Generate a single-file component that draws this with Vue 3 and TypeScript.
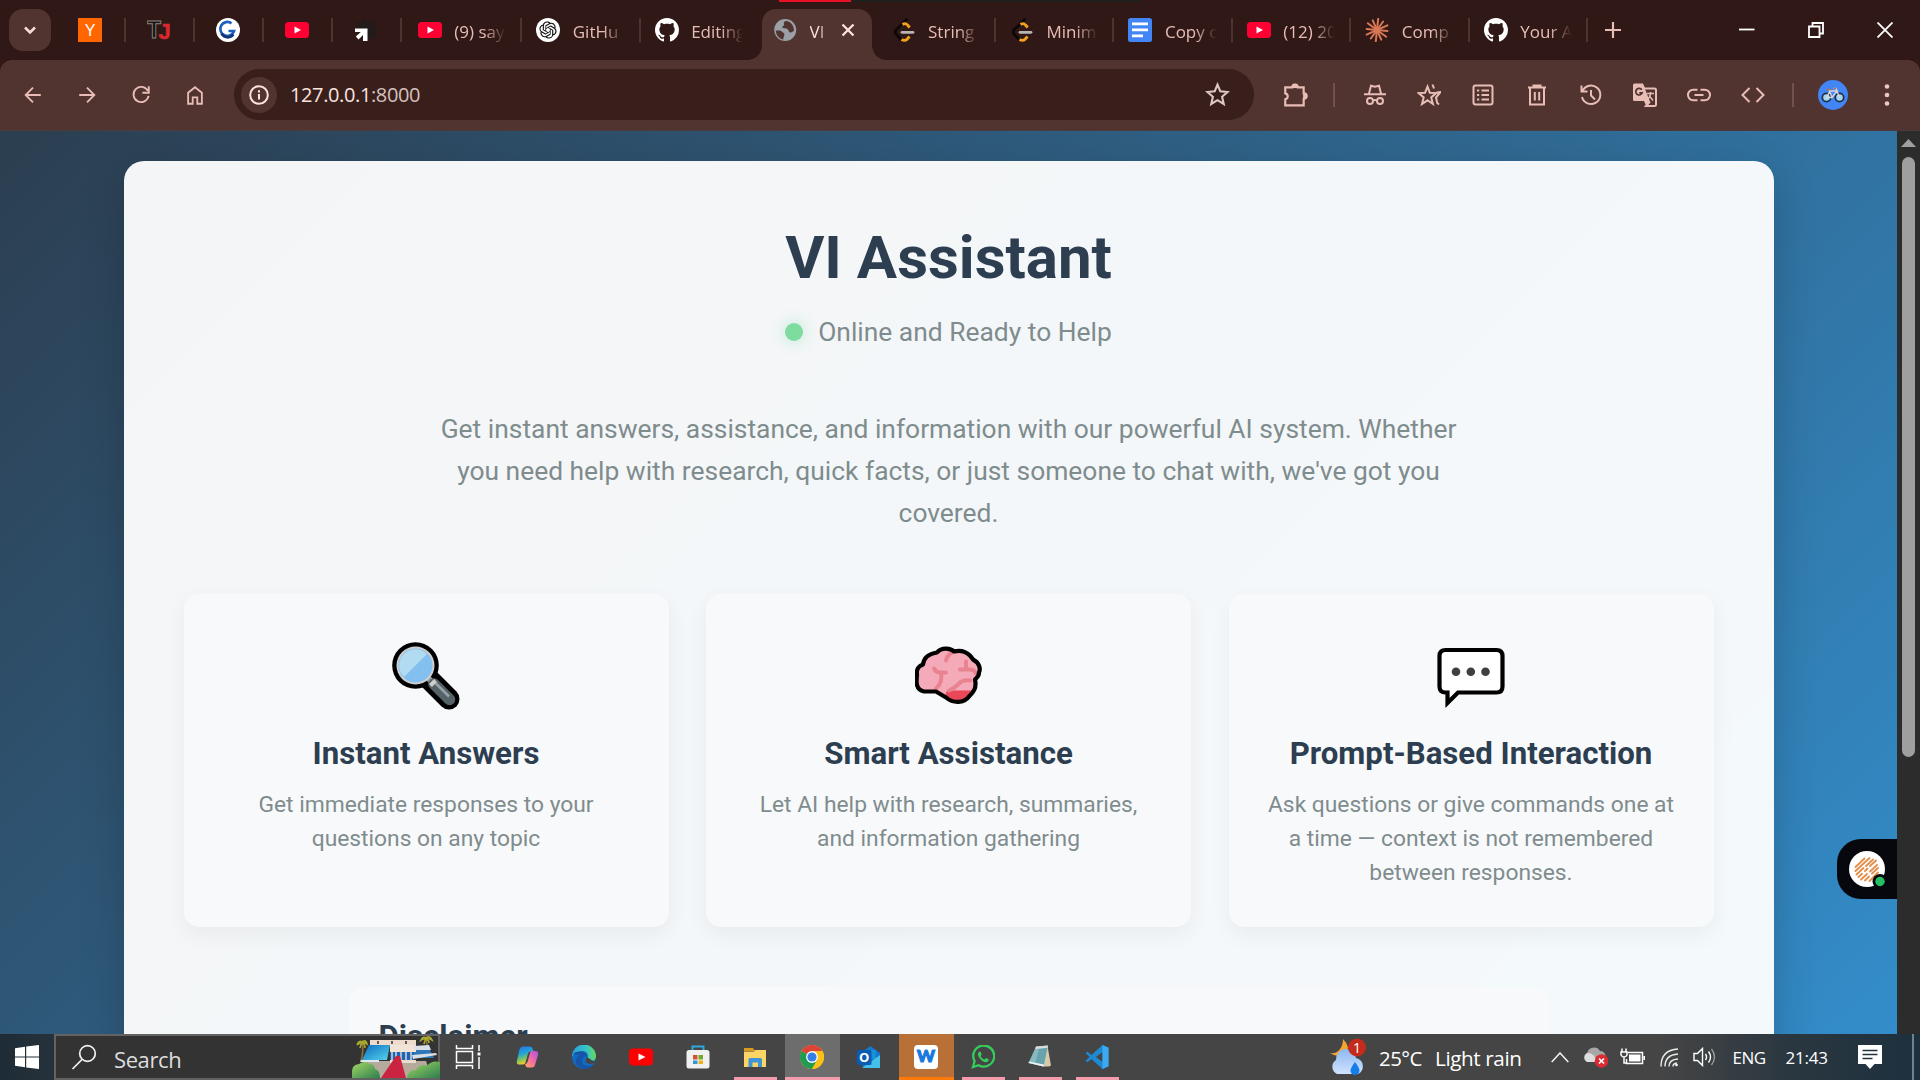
<script setup lang="ts">
interface Tab { icon: string; label?: string; active?: boolean; sep?: boolean }
interface Tool { icon: string; name: string }
interface TaskApp { icon: string; name: string; state?: 'open' | 'focus' | 'alert' }
interface Feature { icon: string; title: string; lines: string[] }

const youtube = '<rect x="0" y="4" width="24" height="16" rx="3.5" fill="#ff0033"/><path d="M9.5 8.5 16 12l-6.500 3.500z" fill="#fff"/>'
const github = '<g transform="scale(1.5)"><path fill="#fff" d="M8 0C3.58 0 0 3.58 0 8c0 3.54 2.29 6.53 5.47 7.59.4.07.55-.17.55-.38 0-.19-.01-.82-.01-1.49-2.01.37-2.53-.49-2.69-.94-.09-.23-.48-.94-.82-1.13-.28-.15-.68-.52-.01-.53.63-.01 1.08.58 1.23.82.72 1.21 1.87.87 2.33.66.07-.52.28-.87.51-1.07-1.78-.2-3.64-.89-3.64-3.95 0-.87.31-1.59.82-2.15-.08-.2-.36-1.02.08-2.12 0 0 .67-.21 2.2.82.64-.18 1.32-.27 2-.27.68 0 1.36.09 2 .27 1.53-1.04 2.2-.82 2.2-.82.44 1.1.16 1.92.08 2.12.51.56.82 1.27.82 2.15 0 3.07-1.87 3.75-3.65 3.95.29.25.54.73.54 1.48 0 1.07-.01 1.93-.01 2.2 0 .21.15.46.55.38A8.013 8.013 0 0016 8c0-4.42-3.58-8-8-8z"/></g>'
const leetcode = '<path d="M14.500 1.500 4.500 11.500q-2.500 2.500 0 5l4.500 5" fill="none" stroke="#0c0806" stroke-width="2.800" stroke-linecap="round"/><path d="M10.500 6.500q3-2 5 .5l2.200 2.500M9.500 21.500q3.500 2 5.800-.5l2.200-2.500" fill="none" stroke="#f5a11c" stroke-width="2.800"/><path d="M10 14.300h11" stroke="#b8b5b4" stroke-width="2.800" stroke-linecap="round"/>'
const rays = Array.from({ length: 12 }, (_, i) => `<path d="M12 12V${i % 2 ? 1.5 : 0.6}" transform="rotate(${i * 30 + 6} 12 12)"/>`).join('')

const fav: Record<string, string> = {
  yc: '<rect width="24" height="24" fill="#ff6600"/><text x="12" y="18" text-anchor="middle" font-family="Liberation Sans" font-size="16" fill="#fff">Y</text>',
  tj: '<text x="0" y="19.500" font-family="Liberation Sans" font-weight="700" font-size="23" fill="#171313" stroke="#8d8583" stroke-width=".9">T</text><text x="11.500" y="20.500" font-family="Liberation Sans" font-weight="700" font-size="22" fill="#e5222b" stroke="#c0393c" stroke-width=".6">J</text>',
  g: '<circle cx="12" cy="12" r="12" fill="#fff"/><path d="M15.500 5.300A7 7 0 1 0 18 13h-5.500" fill="none" stroke="#1b5fc0" stroke-width="2.700"/><path d="M5.500 15.500a7 7 0 0 0 11.800 1" fill="none" stroke="#103475" stroke-width="2.700"/>',
  youtube,
  arrow: '<circle cx="13" cy="12" r="9" fill="#211c1b"/><path d="M3 8 5 4M9 3l2-3M20 4l2-2M22 11h2M20 18l2 2" stroke="#211c1b" stroke-width="3"/><path d="M1 10.500h12.500V23H9v-6l-4.500 4.500-2.700-3 5-4.500H1z" fill="#fff"/>',
  gpt: '<circle cx="12" cy="12" r="12" fill="#fff"/><g transform="translate(3.400 3.400) scale(.717)"><path fill="#111" d="M22.2819 9.8211a5.9847 5.9847 0 0 0-.5157-4.9108 6.0462 6.0462 0 0 0-6.5098-2.9A6.0651 6.0651 0 0 0 4.9807 4.1818a5.9847 5.9847 0 0 0-3.9977 2.9 6.0462 6.0462 0 0 0 .7427 7.0966 5.98 5.98 0 0 0 .511 4.9107 6.051 6.051 0 0 0 6.5146 2.9001A5.9847 5.9847 0 0 0 13.2599 24a6.0557 6.0557 0 0 0 5.7718-4.2058 5.9894 5.9894 0 0 0 3.9977-2.9001 6.0557 6.0557 0 0 0-.7475-7.0729zm-9.022 12.6081a4.4755 4.4755 0 0 1-2.8764-1.0408l.1419-.0804 4.7783-2.7582a.7948.7948 0 0 0 .3927-.6813v-6.7369l2.02 1.1686a.071.071 0 0 1 .038.052v5.5826a4.504 4.504 0 0 1-4.4945 4.4944zm-9.6607-4.1254a4.4708 4.4708 0 0 1-.5346-3.0137l.142.0852 4.783 2.7582a.7712.7712 0 0 0 .7806 0l5.8428-3.3685v2.3324a.0804.0804 0 0 1-.0332.0615L9.74 19.9502a4.4992 4.4992 0 0 1-6.1408-1.6464zM2.3408 7.8956a4.485 4.485 0 0 1 2.3655-1.9728V11.6a.7664.7664 0 0 0 .3879.6765l5.8144 3.3543-2.0201 1.1685a.0757.0757 0 0 1-.071 0l-4.8303-2.7865A4.504 4.504 0 0 1 2.3408 7.872zm16.5963 3.8558L13.1038 8.364 15.1192 7.2a.0757.0757 0 0 1 .071 0l4.8303 2.7913a4.4944 4.4944 0 0 1-.6765 8.1042v-5.6772a.79.79 0 0 0-.407-.667zm2.0107-3.0231l-.142-.0852-4.7735-2.7818a.7759.7759 0 0 0-.7854 0L9.409 9.2297V6.8974a.0662.0662 0 0 1 .0284-.0615l4.8303-2.7866a4.4992 4.4992 0 0 1 6.6802 4.66zM8.3065 12.863l-2.02-1.1638a.0804.0804 0 0 1-.038-.0567V6.0742a4.4992 4.4992 0 0 1 7.3757-3.4537l-.142.0805L8.704 5.459a.7948.7948 0 0 0-.3927.6813zm1.0976-2.3654l2.602-1.4998 2.6069 1.4998v2.9994l-2.5974 1.4997-2.6067-1.4997Z"/></g>',
  github,
  globe: '<circle cx="12.200" cy="12" r="11" fill="#9aa0a6"/><path d="M2.800 12.500c3 0 5-.5 6 1s3 1 2.500 3.500-1 2-1 4.500C6 21 3 17 2.800 12.500zM13 3c-2 .5-2.500 2-2 3.200.6 1.500-2 1.800-1.500 3.300.6 1.500 3.500.5 5 1.500s1 3.500 3 3.500 2-1.500 3.500-1.500C21.300 8 18 3.500 13 3z" fill="#513330"/>',
  leetcode,
  docs: '<rect width="24" height="24" rx="2.500" fill="#4285f4"/><path d="M4 5.900h16M4 11.900h16M4 17.900h11" stroke="#fff" stroke-width="2.800"/>',
  claude: `<g stroke="#d97757" stroke-width="2" stroke-linecap="round">${rays}</g>`,
}

const pinned: Tab[] = [{ icon: 'yc', sep: true }, { icon: 'tj', sep: true }, { icon: 'g', sep: true }, { icon: 'youtube', sep: true }, { icon: 'arrow', sep: true }]
const tabs: Tab[] = [
  { icon: 'youtube', label: '(9) say', sep: true },
  { icon: 'gpt', label: 'GitHu', sep: true },
  { icon: 'github', label: 'Editing' },
  { icon: 'globe', label: 'VI', active: true },
  { icon: 'leetcode', label: 'String', sep: true },
  { icon: 'leetcode', label: 'Minim', sep: true },
  { icon: 'docs', label: 'Copy o', sep: true },
  { icon: 'youtube', label: '(12) 20', sep: true },
  { icon: 'claude', label: 'Comp', sep: true },
  { icon: 'github', label: 'Your A', sep: true },
]

const glyph: Record<string, string> = {
  back: '<path d="M20.500 12H4.500M12 4l-8 8 8 8"/>',
  forward: '<path d="M3.500 12h16M12 4l8 8-8 8"/>',
  reload: '<path d="M19.500 7.500A8.300 8.300 0 1 0 20.300 13M20.500 2.500v7h-7"/>',
  home: '<path d="M4.500 21.500v-12L12 3.500l7.500 6v12h-5v-7h-5v7z"/>',
  star: '<path d="m12 2.500 2.700 6.500 7 .6-5.300 4.600 1.600 6.900-6-3.700-6 3.700 1.600-6.900L2.300 9.600l7-.6z"/>',
  ext: '<path d="M3 5h6.500a2.500 2.500 0 0 1 5 0H20v5.500a2.500 2.500 0 0 1 0 5V21.500H3V16a2.800 2.800 0 0 0 0-5.500z"/><path d="M9.800 4.500a2.200 2.200 0 0 1 4.400 0zM20.500 10.800a2.200 2.200 0 0 1 0 4.400z" fill="currentColor"/>',
  incognito: '<path d="M6 10.500 8 2.800l4 1 4-1 2 7.700M1 11.200h22"/><circle cx="7" cy="18" r="3"/><circle cx="17" cy="18" r="3"/><path d="M10 17.500q2-1.200 4 0"/>',
  stars: '<path d="m10.500 3.500 2.300 6.200 6.400.4-5 4.300 1.700 6.600-5.400-3.700L5 21l1.700-6.600-5-4.300 6.400-.4z"/><path d="m15.500 1.500 1.500 4M19.500 9.500l4-.5-4.500 5.500 1.200 5.500 1.800 1.500"/>',
  list: '<rect x="2.500" y="2.500" width="19" height="19" rx="2"/><path d="M10.500 7.500h7.500M10.500 12h7.500M10.500 16.500h7.500M6 7.500h2.200M6 12h2.200M6 16.500h2.200"/>',
  trash: '<path d="M5 5v16.500h14V5M3 4.500h18M8.500 3.500V2.500h7v1M9.800 9v8.500M14.200 9v8.500"/>',
  history: '<path d="M3.500 8A9.300 9.300 0 1 1 3 14M2.500 2.500v6h6M12 7v5.500l4 4"/>',
  translate: '<path d="M1.500.5H10L12.500 6h-.5l5 12.500-4 4L11 18H1.500Q0 18 0 16.500V2Q0 .5 1.500.5z" fill="currentColor" stroke="none"/><path d="M11.500 5.500h10q1.500 0 1.500 1.500v14.500q0 1.500-1.500 1.500H13l4-4.500"/><path d="M14 10.500h7M17.500 9v1.500q0 3.500-2.500 5.500M16 12.500l4 5" stroke-width="1.500"/><path d="M8.800 6.800a3.300 3.300 0 1 0 .4 3H6.300" stroke="#513330" stroke-width="1.700"/>',
  link: '<path d="M10.500 6.800H6.200a5.200 5.200 0 0 0 0 10.400h4.300M13.500 6.800h4.300a5.200 5.200 0 0 1 0 10.400h-4.300M7.500 12h9"/>',
  code: '<path d="M8.500 5 1.500 12l7 7M15.500 5l7 7-7 7"/>',
}
const tools: Tool[] = [
  { icon: 'incognito', name: 'New incognito window' }, { icon: 'stars', name: 'Bookmarks' }, { icon: 'list', name: 'Reading list' },
  { icon: 'trash', name: 'Delete browsing data' }, { icon: 'history', name: 'History' }, { icon: 'translate', name: 'Translate' },
  { icon: 'link', name: 'Copy link' }, { icon: 'code', name: 'Developer tools' },
]

const brainShape = 'M9 47C-1 45 2 34 2 30c-1-6 3-9 6-10 1-8 7-11 14-12 5-6 14-4 17-1 8-2 15 1 19 8 6 3 8 9 6 13 0 4-2 5-4 7 2 9-2 13-6 17-5 7-16 7-23 1l-10-6h-12z'
const emoji: Record<string, string> = {
  search: '<path d="m38 38 19 19" stroke="#000" stroke-width="21" stroke-linecap="round"/><circle cx="23.500" cy="23.500" r="23.300" fill="#000"/><path d="m36 36 6 6" stroke="#909a9e" stroke-width="6"/><path d="m42 42 15.500 15.500" stroke="#556368" stroke-width="11.500" stroke-linecap="round"/><path d="m43.500 41 13.500 13.500" stroke="#96a3a7" stroke-width="2.500"/><path d="m38.500 43.500 5-5" stroke="#d0cfce" stroke-width="4"/><circle cx="23.500" cy="23.500" r="19" fill="#d0cfce"/><circle cx="23.500" cy="23.500" r="17" fill="#83bfef"/><path d="M12 35A15.500 15.500 0 0 1 35 12z" fill="#b1dbf1"/>',
  brain: `<g transform="translate(0 2.500)"><path d="${brainShape}" fill="#f4aab9"/><path d="M32 46h27c-3 8-9 12-16 12-5 0-8-3-13-7z" fill="#ea4758"/><g fill="none" stroke="#e8838f" stroke-width="4" stroke-linecap="round"><path d="M31 16q1-5 6-8M19 24q2 4 6 4h6M26 28q2 10-5 16M51 17v8M45 25h9q6 0 7 4M34 46q5-2 9-6 4-5 12-4"/></g><path d="${brainShape}" fill="none" stroke="#000" stroke-width="4.200" stroke-linejoin="round"/></g>`,
  chat: '<path d="M8.500 8h51q6 0 6 6v30.500q0 6-6 6H21L10.500 61V50.500h-2q-6 0-6-6V14q0-6 6-6z" fill="#fff" stroke="#000" stroke-width="4.200"/><g fill="#3f3f3f"><circle cx="19" cy="29.800" r="4.300"/><circle cx="33.800" cy="29.800" r="4.300"/><circle cx="48.500" cy="29.800" r="4.300"/></g>',
}
const features: Feature[] = [
  { icon: 'search', title: 'Instant Answers', lines: ['Get immediate responses to your', 'questions on any topic'] },
  { icon: 'brain', title: 'Smart Assistance', lines: ['Let AI help with research, summaries,', 'and information gathering'] },
  { icon: 'chat', title: 'Prompt-Based Interaction', lines: ['Ask questions or give commands one at', 'a time — context is not remembered', 'between responses.'] },
]

const app: Record<string, string> = {
  copilot: '<defs><linearGradient id="cpA" x2=".3" y2="1"><stop stop-color="#2871e8"/><stop offset=".45" stop-color="#20a4d8"/><stop offset=".75" stop-color="#7fc75c"/><stop offset="1" stop-color="#f6ca31"/></linearGradient><linearGradient id="cpB" x1="1" x2="0" y2="1"><stop stop-color="#a853e5"/><stop offset=".5" stop-color="#f06aa5"/><stop offset="1" stop-color="#ffae5c"/></linearGradient></defs><path d="M8 1.500h7q2 0 2.500 2l1 3h-3q-2 0-2.500 2l-2.500 9q-.7 2-2.500 2H4q-3 0-2-4l2.500-11Q5.500 1.500 8 1.500z" fill="url(#cpA)"/><path d="M16.500 6H20q4 0 3 4l-2.800 9.500q-.7 3-3.200 3h-4q-2 0-2.500-2L10 19q2 0 2.700-2.500L15 8q.5-2 1.500-2z" fill="url(#cpB)"/>',
  edge: '<defs><linearGradient id="egA" x2="1"><stop stop-color="#289edb"/><stop offset=".6" stop-color="#36c4c7"/><stop offset="1" stop-color="#65da58"/></linearGradient></defs><circle cx="12" cy="12" r="12" fill="#126bc1"/><path d="M0 12A12 12 0 0 1 24 11c0 6-7 7-9 4-.5-1 1-1 1-4 0-5-6-6-10-4-3 1.300-5.500 3-6 5z" fill="url(#egA)"/><path d="M1 9c4-4 14-3 14 3-5-3-9 8 1 9 3 .2 5-1 6-2-4 6-11 6-15 3-5-4-4-10 1-12-3-.5-5-.5-7-1z" fill="#1655a5"/><path d="M15 12q-4 6 3 7 3 0 6-2-4-1-9-5z" fill="#454545"/>',
  youtube: '<rect y="3.500" width="24" height="17" rx="4" fill="#f00"/><path d="m9.500 8.500 7 3.500-7 3.500z" fill="#fff"/>',
  store: '<path d="M6.500 6V1.500h11V6" fill="none" stroke="#2fa9dd" stroke-width="2"/><rect x=".5" y="5" width="23" height="18.500" rx="2.500" fill="#f0f0f0"/><path d="M7 10h4.500v4.500H7z" fill="#d1532f"/><path d="M12.500 10H17v4.500h-4.500z" fill="#72a92e"/><path d="M7 15.500h4.500V19H7z" fill="#2d9bd3"/><path d="M12.500 15.500H17V19h-4.500z" fill="#f2ae1b"/>',
  explorer: '<path d="M1 3h9l2 3H1z" fill="#d99b1c"/><path d="M1 6.500h10l1-1.500h11v17H1z" fill="#fdd565"/><path d="M5.500 22V14.500q0-1.500 1.500-1.500h10.500q1.500 0 1.500 1.500V22h-4v-4.500H9.500V22z" fill="#3f95d5"/>',
  chrome: '<circle cx="12" cy="12" r="12" fill="#fbc116"/><path d="M12 12 1.600 6A12 12 0 0 1 22.400 6H12z" fill="#dd4436"/><path d="M12 12 1.600 6a12 12 0 0 0 10.400 18l5.200-9z" fill="#229b52"/><path d="M12 6h10.400a12 12 0 0 1-10.400 18l5.200-9z" fill="#fbc116"/><circle cx="12" cy="12" r="5.900" fill="#fff"/><circle cx="12" cy="12" r="4.600" fill="#347fea"/>',
  outlook: '<path d="M3 8 13.500 1 23 8v14.500H6z" fill="#1676ca"/><path d="M6 5h13v9H6z" fill="#1690dc"/><path d="M5 23 23 10v13z" fill="#44c1ea"/><rect y="5" width="14.500" height="15" rx="1.500" fill="#0b5bb3"/><text x="7.200" y="17" text-anchor="middle" font-family="Open Sans" font-weight="700" font-size="13" fill="#fff">O</text>',
  wps: '<rect width="24" height="24" rx="4" fill="#fff"/><text x="12" y="17.300" text-anchor="middle" font-family="Lato" font-weight="900" font-size="17" fill="#1878dd" stroke="#1878dd" stroke-width="1.100">W</text>',
  whatsapp: '<path d="m2 22 1.600-5.800a10.500 10.500 0 1 1 4 4z" fill="none" stroke="#33cd5c" stroke-width="2.300"/><path d="M7 8.500q1-2.500 2.500-1.800l1.200 2.800-1.200 1.700q1.200 2.300 3.800 3.500l1.500-1.800 2.900 1.300c.5 1-1 3-3 3C11 17 6.500 12 7 8.500z" fill="#33cd5c"/>',
  notepad: '<path d="M19.500 1 23 20.500l-2 1-6.500 0z" fill="#d8c8ac"/><path d="M8 1.500 20 .5l-4.500 21L.5 18z" fill="#88b9c1"/><path d="M8 1.500 20 .5l-.5 2.500-12.300 1z" fill="#d7dcdc"/><path d="m11 4 8.300-1-3.800 18.500L7 19.500z" fill="#66a3ad"/><path d="m1 16.500 15 3-.5 2L.5 18z" fill="#eef2f2"/>',
  code: '<path d="m17.500 0 6 2.800v18.400l-6 2.800L6.500 14l-4 3.200L.5 16l4-4-4-4 2-1.200 4 3.200zm0 7L11 12l6.500 5z" fill="#1e8ad3"/><path d="m17.500 0 6 2.800v18.400l-6 2.800z" fill="#3ca9f2"/>',
}
const apps: TaskApp[] = [
  { icon: 'copilot', name: 'Copilot' }, { icon: 'edge', name: 'Edge' }, { icon: 'youtube', name: 'YouTube' }, { icon: 'store', name: 'Store' },
  { icon: 'explorer', name: 'Explorer', state: 'open' }, { icon: 'chrome', name: 'Chrome', state: 'focus' }, { icon: 'outlook', name: 'Outlook' },
  { icon: 'wps', name: 'WPS', state: 'alert' }, { icon: 'whatsapp', name: 'WhatsApp', state: 'open' }, { icon: 'notepad', name: 'Notepad', state: 'open' },
  { icon: 'code', name: 'Code', state: 'open' },
]
</script>

<template>
  <div class="screen">
    <header class="tabstrip">
      <div class="edge-line"></div>
      <button class="tab-search"><svg width="24" height="24" viewBox="0 0 24 24"><path d="m7 9.500 5 5 5-5" fill="none" stroke="#f7dcd8" stroke-width="2.500" /></svg></button>
      <div v-for="(t, i) in pinned" :key="i" class="pin">
        <svg width="24" height="24" viewBox="0 0 24 24" v-html="fav[t.icon]"></svg>
        <i v-if="t.sep" class="sep"></i>
      </div>
      <div v-for="(t, i) in tabs" :key="'t' + i" class="tab" :class="{ active: t.active, first: i === 0 }">
        <svg class="fav" width="24" height="24" viewBox="0 0 24 24" v-html="fav[t.icon]"></svg>
        <span class="label">{{ t.label }}</span>
        <svg v-if="t.active" class="close" width="14" height="14" viewBox="0 0 14 14"><path d="m1.500 1.500 11 11m0-11-11 11" stroke="#fbe3df" stroke-width="2.300" /></svg>
        <i v-if="t.sep" class="sep"></i>
      </div>
      <svg class="plus" width="16" height="16" viewBox="0 0 16 16"><path d="M8 0v16M0 8h16" stroke="#e8bdb6" stroke-width="2.200" /></svg>
      <div class="win">
        <svg width="16" height="16" viewBox="0 0 16 16"><path d="M0 7.500h15.500" /></svg>
        <svg width="16" height="16" viewBox="0 0 16 16"><path d="M1 4.500h10.500V15H1zM4.500 4V1H15v10.500h-3" /></svg>
        <svg width="16" height="16" viewBox="0 0 16 16"><path d="m.5.5 15 15m0-15-15 15" /></svg>
      </div>
    </header>

    <nav class="toolbar">
      <div class="nav-icons">
        <svg v-for="n in ['back', 'forward', 'reload', 'home']" :key="n" class="ico" width="22" height="22" viewBox="0 0 24 24" v-html="glyph[n]"></svg>
      </div>
      <div class="omnibox">
        <span class="info"><svg width="20" height="20" viewBox="0 0 20 20"><circle cx="10" cy="10" r="8.800" fill="none" stroke="#fbe3df" stroke-width="2" /><path d="M10 9v5.500M10 5.300v2.200" stroke="#fbe3df" stroke-width="2" /></svg></span>
        <span class="url">127.0.0.1<em>:8000</em></span>
        <svg class="ico star" width="25" height="25" viewBox="0 0 24 24" v-html="glyph.star"></svg>
      </div>
      <svg class="ico ext" width="26" height="26" viewBox="0 0 24 24" v-html="glyph.ext"></svg>
      <i class="tsep"></i>
      <div class="tools">
        <span v-for="t in tools" :key="t.icon"><svg class="ico" width="24" height="24" viewBox="0 0 24 24" v-html="glyph[t.icon]"></svg></span>
      </div>
      <i class="tsep second"></i>
      <svg class="avatar" width="30" height="30" viewBox="0 0 30 30">
        <circle cx="15" cy="15" r="15" fill="#4285f4" />
        <g fill="#9ed8f5" stroke="#223045" stroke-width="1.800"><circle cx="8.500" cy="17.500" r="4.200" /><circle cx="21.500" cy="17.500" r="4.200" /></g>
        <path d="m8.500 17.500 3.500-6.500h7l-5 6.500zm5.500 0-3-8m10.500 8L18 8.500h-2.500" fill="none" stroke="#ded6d6" stroke-width="1.300" />
        <path d="M8.500 9.500h4M15.500 8.500h2.500" stroke="#b86a5c" stroke-width="1.500" />
      </svg>
      <svg class="dots" width="6" height="26" viewBox="0 0 6 26" fill="#f0c6c0"><circle cx="3" cy="4.500" r="2.300" /><circle cx="3" cy="13" r="2.300" /><circle cx="3" cy="21.500" r="2.300" /></svg>
    </nav>

    <div class="viewport">
      <div class="page">
        <main class="panel">
          <h1>VI Assistant</h1>
          <div class="status"><i class="dot"></i><span>Online and Ready to Help</span></div>
          <p class="intro">Get instant answers, assistance, and information with our powerful AI system. Whether<br>you need help with research, quick facts, or just someone to chat with, we've got you<br>covered.</p>
          <section class="features">
            <article v-for="f in features" :key="f.title" class="card">
              <svg width="68" height="68" viewBox="0 0 68 68" v-html="emoji[f.icon]"></svg>
              <h3>{{ f.title }}</h3>
              <p><template v-for="(l, i) in f.lines" :key="l"><br v-if="i">{{ l }}</template></p>
            </article>
          </section>
          <section class="disclaimer"><h3>Disclaimer</h3></section>
        </main>
      </div>
      <div class="scroll">
        <svg width="15" height="8" viewBox="0 0 15 8"><path d="M7.500 0 15 8H0z" fill="#a0a0a0" /></svg>
        <div class="thumb"></div>
      </div>
      <div class="widget">
        <svg width="44" height="44" viewBox="0 0 44 44">
          <circle cx="22" cy="22" r="18" fill="#fff" />
          <g stroke="#e3904c" stroke-width="1.900" stroke-linecap="round">
            <path d="m10.500 20 9-8.500M10.500 24 24.500 11M11.500 27.500l7-6.500M21 19l7-6.500M13.500 30l3.500-3.300M20 24l2.500-2.500M25 19l6-5.500M16 32.500l6-5.500M25 24.500l7-6.500M20 33.500l4-4M27 26.500l6-5.500M24.500 34l8.500-8.500" />
          </g>
          <circle cx="35" cy="34.500" r="7.500" fill="#07080d" /><circle cx="35" cy="34.500" r="4.700" fill="#25c063" />
        </svg>
      </div>
    </div>

    <footer class="taskbar">
      <div class="start"><svg width="24" height="24" viewBox="0 0 24 24" fill="#fff"><path d="m0 3.200 10-1.400v9.600H0zM11.200 1.600 24 0v11.400H11.200zM0 12.600h10v9.600L0 20.800zM11.200 12.600H24V24l-12.800-1.600z" /></svg></div>
      <div class="search">
        <svg width="26" height="26" viewBox="0 0 26 26"><circle cx="16.500" cy="9.500" r="7.800" fill="none" stroke="#f2f2f2" stroke-width="1.700" /><path d="M11 15.500 1.500 25" stroke="#f2f2f2" stroke-width="1.700" /></svg>
        <span>Search</span>
        <svg class="art" width="88" height="42" viewBox="0 0 88 42">
          <defs>
            <linearGradient id="glass" x2="1" y2="1"><stop stop-color="#0b6cc0" /><stop offset="1" stop-color="#57d5ed" /></linearGradient>
            <linearGradient id="bush" x2="1" y2="1"><stop stop-color="#a4d765" /><stop offset="1" stop-color="#2c7f4e" /></linearGradient>
          </defs>
          <path d="M10 7q2 7-1 18M74 4q2 5 0 10" stroke="#8a713a" stroke-width="1.700" fill="none" />
          <path d="M5 9q2-5 5-3 4-3 5 2-3-2-5-1-3 0-5 2zM8 12q1-4 2-5 3 1 3 5M69 4q2-4 5-2 4-3 6 2-3-2-5-1-3-1-6 1zM72 8q1-4 2-5 3 1 3 4" fill="none" stroke="#a9a932" stroke-width="1.600" />
          <path d="M12 25h62l6 17H8z" fill="#b5aa9c" />
          <path d="M17 9h21l-3 15H10z" fill="url(#glass)" />
          <path d="M9 24h18v2H8z" fill="#dfe7ee" />
          <path d="M60 10h16l6 12H60z" fill="#2f78b8" />
          <path d="M18 4h46v5H18z" fill="#eedbcc" /><path d="M38 9h26v7H38z" fill="#f1e3d7" /><path d="M38 16h24v8H38z" fill="#1f65b3" />
          <path d="M40 16v8m4-8v8m5-8v8m5-8v8m5-8v8" stroke="#eee6df" stroke-width="1.300" />
          <path d="m62 10 15-1 2 5H64zM60 19l24-2 1 2-24 4z" fill="#d9dfe7" />
          <path d="M38 24h26v3H38z" fill="#e8dccf" />
          <path d="M44 20h4l6 22H29z" fill="#cb2440" />
          <path d="M0 42v-7q0-6 7-7 5-4 11 0 4 0 5 5 5 1 5 9z" fill="url(#bush)" />
          <path d="M55 42q1-9 9-8 4-7 11-4 4-6 13-4v16z" fill="url(#bush)" />
          <path d="M26 5v3M40 5v3M54 5v3" stroke="#343047" stroke-width="1.500" />
        </svg>
      </div>
      <div class="taskview"><svg width="26" height="26" viewBox="0 0 26 26" fill="none" stroke="#fff" stroke-width="1.500"><path d="M1.500 1v3.500h16V1M1.500 25v-3.500h16V25M1.500 7.500h16v11h-16zM24 1v6M24 13v12" /><path d="M22.500 8.500h3v3h-3z" fill="#fff" stroke="none" /></svg></div>
      <div class="apps">
        <div v-for="a in apps" :key="a.name" class="app" :class="a.state"><svg width="24" height="24" viewBox="0 0 24 24" v-html="app[a.icon]"></svg></div>
      </div>
      <div class="tray">
        <svg class="weather" width="38" height="38" viewBox="0 0 38 38">
          <defs><linearGradient id="cl" x2="0" y2="1"><stop stop-color="#8bb8f2" /><stop offset="1" stop-color="#d2e2fc" /></linearGradient></defs>
          <path d="M14 1q8 8 3 15Q10 21 1 15q7 1 10-4 3-4 3-10z" fill="#f2a62e" />
          <path d="M8 36a8 8 0 0 1-1-14 10 10 0 0 1 20-2 8.500 8.500 0 0 1 2 16z" fill="url(#cl)" />
          <path d="M26 24q4.500 6 4.500 8.500a4.500 4.500 0 0 1-9 0q0-2.500 4.500-8.500z" fill="#167cec" />
          <circle cx="28" cy="9.500" r="9" fill="#c42b1c" /><text x="28" y="14.500" text-anchor="middle" font-family="Open Sans" font-size="14" fill="#fff">1</text>
        </svg>
        <span class="temp">25°C</span><span class="cond">Light rain</span>
        <svg class="chev" width="18" height="11" viewBox="0 0 18 11"><path d="m.7 10 8.300-9 8.300 9" fill="none" stroke="#f4f4f4" stroke-width="1.500" /></svg>
        <svg class="cloud" width="24" height="22" viewBox="0 0 24 22"><path d="M3 16a4.500 4.500 0 0 1 0-8 7 7 0 0 1 13-3 6 6 0 0 1 3 11z" fill="#a7a7a7" /><path d="M3 16a5 5 0 0 1 0-9q7-1 10 9z" fill="#ddd" /><circle cx="17.500" cy="15" r="6.800" fill="#d92b31" /><path d="m15 12.500 5 5m0-5-5 5" stroke="#fff" stroke-width="1.700" /></svg>
        <svg class="batt" width="25" height="18" viewBox="0 0 25 18" fill="none" stroke="#fff" stroke-width="1.500"><path d="M8 4.500h14.500v11H6.500V11M24.300 8v4M2 .5V4M6 .5V4M1 4h6v3q-1 2-3 2T1 7zM4 9v6h2.500" /><path d="M9 6.500h11.500v7H9z" fill="#fff" stroke="none" /></svg>
        <svg class="wifi" width="19" height="19" viewBox="0 0 19 19" fill="none" stroke="#ececec" stroke-width="1.400"><path d="M1 18.500Q1 2 18 1M5 18.500Q5 7 18 6M9 18.500Q9 11.500 18 11M13 18.500q0-3 4-3.500" /><circle cx="16.500" cy="17" r="1.300" fill="#fff" stroke="none" /></svg>
        <svg class="vol" width="23" height="20" viewBox="0 0 23 20" fill="none" stroke="#fff" stroke-width="1.400"><path d="M1 6.500h3.500l5-5v17l-5-5H1zM12.500 7q2 3 0 6M15.500 4.500q4 5.500 0 11" /><path d="M18.500 2q6 8 0 16" stroke="#999" /></svg>
        <span class="lang">ENG</span><span class="time">21:43</span>
        <svg class="note" width="24" height="24" viewBox="0 0 24 24"><path d="M0 0h24v19h-7.500L12 24l-4.500-5H0z" fill="#fff" /><path d="M4.500 5.500h15M4.500 9.500h15M4.500 13.500h10" stroke="#22323e" stroke-width="1.400" /></svg>
        <i class="peek"></i>
      </div>
    </footer>
  </div>
</template>

<style>
html, body { margin: 0; overflow: hidden; background: #2f1815; }
</style>

<style scoped>
* { box-sizing: border-box; }
svg { display: block; flex: none; }
h1, h3, p { margin: 0; }
.screen { width: 1920px; height: 1080px; display: flex; flex-direction: column; overflow: hidden; background: #2f1815; font-family: "Open Sans", "Noto Sans", sans-serif; }

.tabstrip { position: relative; flex: none; height: 60px; display: flex; align-items: center; padding-left: 9px; background: #2f1815; }
.edge-line { position: absolute; top: 0; left: 779px; width: 361px; height: 2px; background: linear-gradient(90deg, #e81123 72px, #20201f 72px); }
.tab-search { width: 42px; height: 42px; margin: 0 4.500px 0 0; border: 0; border-radius: 14px; padding: 0; display: flex; align-items: center; justify-content: center; background: #513330; }
.pin { flex: none; position: relative; width: 69px; height: 60px; display: flex; align-items: center; justify-content: center; padding-right: 1px; }
.tab { flex: none; position: relative; width: 118.450px; height: 60px; display: flex; align-items: center; padding-left: 15px; }
.tab.first { margin-left: 2.300px; }
.sep { position: absolute; right: -1px; top: 18px; width: 2px; height: 24px; background: #4f3330; }
.label { margin-left: 12.500px; min-width: 51px; height: 60px; line-height: 63px; white-space: nowrap; font-size: 17px; color: #e8bdb6; -webkit-mask-image: linear-gradient(90deg, #000 30px, transparent 52px); mask-image: linear-gradient(90deg, #000 30px, transparent 52px); }
.tab.active::before { content: ""; position: absolute; left: 4px; top: 9px; width: 110px; height: 51px; background: #513330; border-radius: 14px 14px 0 0; }
.tab.active::after { content: ""; position: absolute; left: -10px; bottom: 0; width: 138px; height: 14px; background: radial-gradient(circle at 0 0, transparent 13.500px, #513330 14px) 0 0 / 14px 14px no-repeat, radial-gradient(circle at 14px 0, transparent 13.500px, #513330 14px) 124px 0 / 14px 14px no-repeat; }
.tab.active svg, .tab.active .label { position: relative; z-index: 1; }
.tab.active .label { min-width: 16px; width: 16px; color: #fbe3df; -webkit-mask-image: linear-gradient(90deg, #000 10px, transparent 17px); mask-image: linear-gradient(90deg, #000 10px, transparent 17px); }
.close { margin-left: 15px; }
.plus { margin-left: 17.500px; }
.win { margin-left: auto; margin-right: 27px; display: flex; gap: 53px; }
.win svg { fill: none; stroke: #fff; stroke-width: 1.800; }

.toolbar { flex: none; height: 71px; display: flex; align-items: center; padding: 0 30px 0 22px; background: #513330; border-bottom: 1px solid #4a3c3d; border-radius: 12px 12px 0 0; }
.ico { fill: none; stroke: currentColor; stroke-width: 2; color: #e8bdb6; }
.nav-icons { display: flex; gap: 32px; }
.omnibox { width: 1020px; height: 51px; margin: 0 0 1px 28px; border-radius: 26px; background: #391f1c; display: flex; align-items: center; padding-left: 7px; }
.info { width: 36px; height: 36px; border-radius: 50%; background: #513330; display: flex; align-items: center; justify-content: center; }
.url { margin-left: 13px; font-size: 20px; letter-spacing: -.38px; color: #fbe3df; }
.url em { font-style: normal; color: #d8c0bc; }
.star { margin-left: auto; margin-right: 24px; color: #e0c8c4; }
.ext { margin-left: 27.500px; }
.tsep { width: 2px; height: 24px; margin-left: 25px; background: #75514d; }
.tsep.second { margin-left: 12.500px; }
.tools { display: flex; margin-left: 13.500px; }
.tools span { width: 53.950px; display: flex; justify-content: center; }
.avatar { margin-left: 23.500px; }
.dots { margin-left: auto; }

.viewport { position: relative; flex: none; height: 903px; display: flex; overflow: hidden; }
.page { flex: none; width: 1897px; height: 1300px; padding-top: 30px; background: linear-gradient(135deg, #2c3e50, #3498db); }
.panel { width: 1650px; height: 1240px; margin: 0 auto; padding: 61.500px 60px 0; border-radius: 20px; background: rgba(255, 255, 255, .95); box-shadow: 0 15px 45px rgba(0, 0, 0, .2); font-family: Roboto, sans-serif; color: #7f8c8d; text-align: center; }
h1 { font-size: 60px; line-height: 70px; font-weight: 700; color: #2c3e50; }
.status { margin-top: 18px; height: 42px; display: flex; align-items: center; justify-content: center; gap: 15px; font-size: 26.400px; line-height: 42px; }
.dot { width: 18px; height: 18px; border-radius: 50%; background: #7edc9f; box-shadow: 0 0 15px rgba(46, 204, 113, .3); }
.intro { margin-top: 55px; font-size: 26.400px; line-height: 42.240px; white-space: nowrap; }
.features { margin-top: 60px; display: flex; gap: 37.500px; }
.card { flex: 1; height: 333px; padding-top: 48px; border-radius: 15px; background: #f8f9fb; box-shadow: 0 7.500px 22.500px rgba(0, 0, 0, .05); display: flex; flex-direction: column; align-items: center; }
.card h3 { margin-top: 21px; font-size: 31.200px; line-height: 46px; font-weight: 700; color: #2c3e50; }
.card p { margin-top: 10.600px; font-size: 22.800px; line-height: 34.300px; white-space: nowrap; }
.disclaimer { width: 1200px; height: 240px; margin: 59.500px auto 0; padding: 30px 30px; border-radius: 15px; background: #f8f9fb; text-align: left; }
.disclaimer h3 { font-size: 31.200px; line-height: 39px; font-weight: 700; color: #2c3e50; }
.scroll { width: 23px; background: #2c2c2c; display: flex; flex-direction: column; align-items: center; padding-top: 8px; }
.thumb { width: 13px; height: 600px; margin-top: 10px; border-radius: 7px; background: #9f9f9f; }
.widget { position: absolute; right: 23px; top: 708px; width: 60px; height: 60px; padding: 8px; border-radius: 24px 0 0 24px; background: #07080d; }

.taskbar { flex: none; height: 46px; display: flex; background: linear-gradient(90deg, #1e2c37 0, #26323b 54px, #454545 440px, #454545 1660px, #2a3740 1790px, #1d303e 1920px); color: #fff; }
.start { width: 54px; display: flex; align-items: center; justify-content: center; }
.search { width: 386px; border: 2px solid #626262; background: #333; display: flex; align-items: center; padding-left: 15px; }
.search span { margin: 3px 0 0 17px; font-size: 22px; letter-spacing: -.4px; color: #dedede; }
.art { margin-left: auto; margin-right: -2px; }
.taskview { width: 58.500px; padding-left: 14.500px; display: flex; align-items: center; }
.apps { display: flex; }
.app { width: 57px; display: flex; align-items: center; justify-content: center; background: no-repeat center; }
.app.open { background: linear-gradient(#f49bac, #f49bac) no-repeat center bottom / 43px 3px; }
.app.focus { background: linear-gradient(#f49bac, #f49bac) no-repeat center bottom / 55px 3px, linear-gradient(#6d6d6d, #6d6d6d) no-repeat center / 55px 100%; }
.app.alert { background: linear-gradient(#ff7a0a, #ff7a0a) no-repeat center bottom / 55px 3px, linear-gradient(#b87037, #b87037) no-repeat center / 55px 100%; }
.tray { flex: 1; display: flex; align-items: center; padding-left: 203.500px; white-space: nowrap; }
.temp { margin: 2px 0 0 12px; width: 56px; font-size: 20.400px; letter-spacing: -.5px; }
.cond { margin-top: 2px; width: 116px; font-size: 20.700px; letter-spacing: -.4px; }
.cloud { margin-left: 15px; }
.batt { margin-left: 12px; }
.wifi { margin-left: 15px; }
.vol { margin-left: 13.500px; }
.lang { margin-left: 17px; width: 53px; font-size: 17px; letter-spacing: -.5px; }
.time { width: 72.500px; font-size: 17px; letter-spacing: -.2px; }
.peek { margin-left: 30px; width: 2px; height: 46px; background: #75818a; }
</style>
